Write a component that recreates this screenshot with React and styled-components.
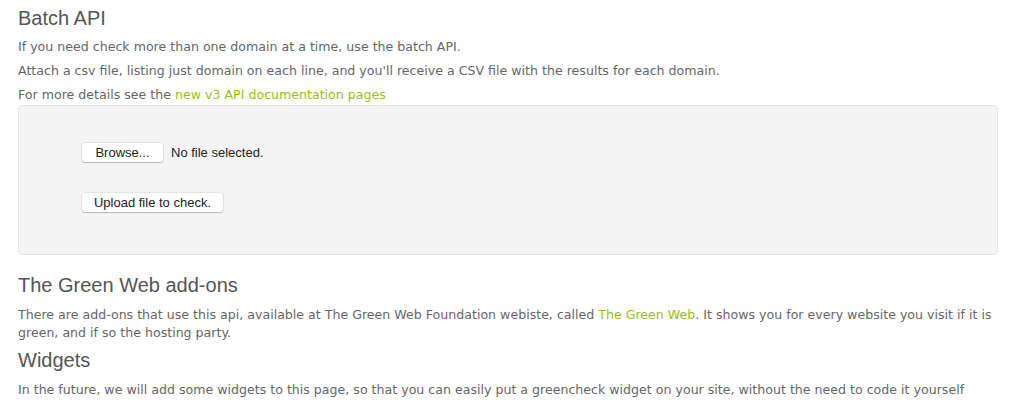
import React from "react";
import styled, { createGlobalStyle } from "styled-components";

const Global = createGlobalStyle`
  html, body { margin: 0; padding: 0; background: #fff; }
  body { font-family: "DejaVu Sans", Verdana, sans-serif; }
`;

const Page = styled.div`
  padding: 0 26px 0 18px;
  color: #666;
  font-family: "DejaVu Sans", Verdana, sans-serif;
  font-size: 12.6px;
  line-height: 18px;
`;

const Heading = styled.h2`
  font-family: "Liberation Sans", Arial, sans-serif;
  font-weight: normal;
  font-size: 20px;
  line-height: 24px;
  color: #555;
  margin: ${(p) => p.$mt ?? 6}px 0 ${(p) => p.$mb ?? 6}px;
`;

const Para = styled.p`
  margin: 0 0 ${(p) => p.$mb ?? 6}px;
`;

const Link = styled.a`
  color: #97bf12;
  text-decoration: none;
`;

const Well = styled.div`
  background: #f4f4f4;
  border: 1px solid #e4e4e4;
  border-radius: 4px;
  height: 150px;
  padding: 37px 0 0 63px;
  box-sizing: border-box;
  display: flex;
  flex-direction: column;
  gap: 31px;
  margin-top: 1px;
`;

const FileRow = styled.div`
  display: flex;
  align-items: center;
  gap: 8px;
  font-family: "Liberation Sans", Arial, sans-serif;
  font-size: 13px;
  color: #222;
`;

const MacButton = styled.button`
  font-family: "Liberation Sans", Arial, sans-serif;
  font-size: 13px;
  color: #222;
  background: #fff;
  border: none;
  border-radius: 3px;
  box-shadow: 0 0 0 0.5px rgba(0,0,0,0.12), 0 1px 1px rgba(0,0,0,0.2);
  height: 19px;
  padding: 0;
  white-space: nowrap;
  box-sizing: border-box;
  width: ${(p) => p.$w}px;
  align-self: flex-start;
`;

export default function App() {
  return (
    <>
      <Global />
      <Page>
        <Heading $mt={6} $mb={8}>Batch API</Heading>
        <Para>If you need check more than one domain at a time, use the batch API.</Para>
        <Para>Attach a csv file, listing just domain on each line, and you'll receive a CSV file with the results for each domain.</Para>
        <Para $mb={0}>For more details see the <Link href="#">new v3 API documentation pages</Link></Para>
        <Well>
          <FileRow>
            <MacButton $w={81}>Browse...</MacButton>
            <span>No file selected.</span>
          </FileRow>
          <MacButton $w={141}>Upload file to check.</MacButton>
        </Well>
        <Heading $mt={18} $mb={9}>The Green Web add-ons</Heading>
        <Para>There are add-ons that use this api, available at The Green Web Foundation webiste, called <Link href="#">The Green Web</Link>. It shows you for every website you visit if it is green, and if so the hosting party.</Para>
        <Heading $mt={0} $mb={9}>Widgets</Heading>
        <Para>In the future, we will add some widgets to this page, so that you can easily put a greencheck widget on your site, without the need to code it yourself</Para>
      </Page>
    </>
  );
}
